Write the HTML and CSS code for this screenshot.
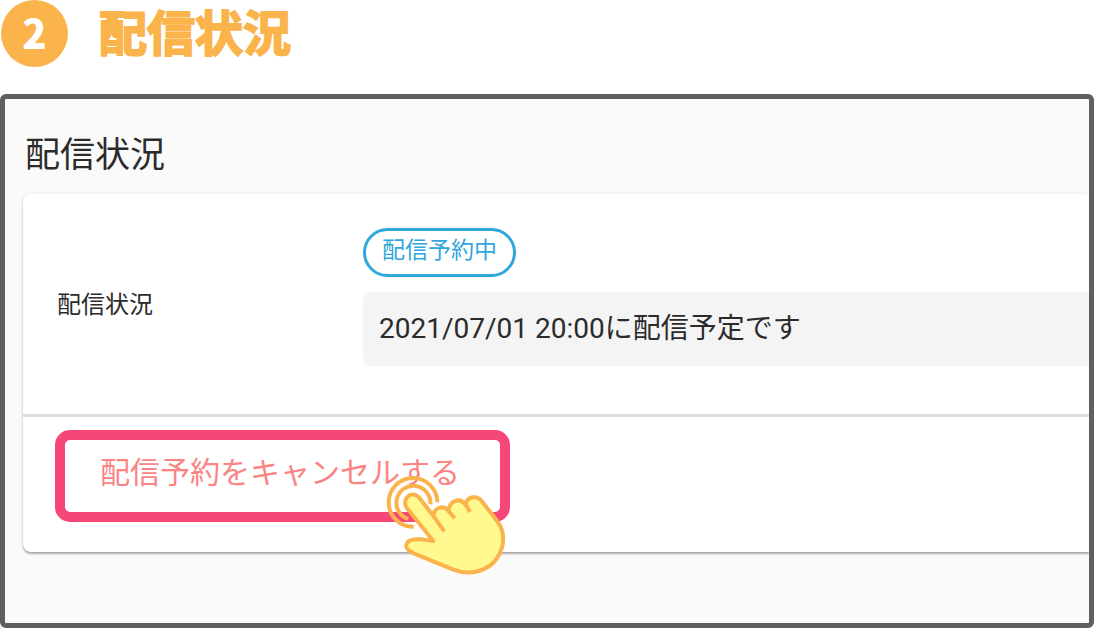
FILE: index.html
```html
<!DOCTYPE html>
<html lang="ja">
<head>
  <meta charset="UTF-8">
  <meta name="viewport" content="width=device-width, initial-scale=1.0">
  <title>配信状況</title>
  <link rel="stylesheet" href="styles.css">
</head>
<body>
  <header class="step">
    <span class="step-number">2</span>
    <h1 class="step-title">配信状況</h1>
  </header>

  <main class="screen">
    <h2 class="screen-title">配信状況</h2>

    <section class="card">
      <div class="status-row">
        <div class="status-label">配信状況</div>
        <div class="status-content">
          <span class="badge">配信予約中</span>
          <p class="message">2021/07/01 20:00に配信予定です</p>
        </div>
      </div>

      <div class="actions">
        <button class="cancel-button" type="button">
          配信予約をキャンセルする
          <!-- タップの手アイコン -->
          <svg class="tap-icon" viewBox="48 45 360 300" aria-hidden="true">
            <path class="ring" d="M131 200A73 73 0 1 1 202 127"/>
            <path class="ring" d="M115 177A51 51 0 1 1 181 133"/>
            <path class="hand" d="M190 243L111 145C92 119 126 85 149 115L191 169C189 146 218 131 235 152C238 124 268 109 287 134C292 108 321 105 335 123L382 184C405 215 406 256 382 293C357 332 302 349 250 329L133 281C117 274 106 267 109 254C113 236 140 237 153 238Z"/>
            <path class="hand" d="M191 169L223 214M235 152L254 175M287 134L300 156"/>
          </svg>
        </button>
      </div>
    </section>
  </main>
</body>
</html>
```
FILE: styles.css
```css
:root {
  --orange: #fbb44c;
  --blue: #30a7dc;
  --pink: #f74678;
  --frame: #605e5f;
  --bg-screen: #fafafa;
  --bg-message: #f4f4f4;
  --text-main: #2b2b2b;
}

* {
  box-sizing: border-box;
}

body {
  display: flex;
  flex-direction: column;
  min-height: 100vh;
  margin: 0;
  font-family: Roboto, "Noto Sans CJK JP", sans-serif;
  background-color: #fff;
  color: var(--text-main);
}

.step {
  display: flex;
  align-items: flex-start;
  gap: 31px;
  height: 68px;
  margin-bottom: 26px;
  padding-left: 1px;
}

.step-number {
  width: 67px;
  height: 67px;
  border-radius: 50%;
  background-color: var(--orange);
  color: #fff;
  font-family: "Noto Sans CJK JP", sans-serif;
  font-size: 40px;
  font-weight: 900;
  line-height: 64px;
  text-align: center;
}

.step-title {
  margin: 0;
  color: var(--orange);
  font-size: 48px;
  font-weight: 700;
  line-height: 70px;
  -webkit-text-stroke: 2px var(--orange);
}

.screen {
  flex: 1;
  padding: 32px 0 70px 18px;
  overflow: hidden;
  border: 5px solid var(--frame);
  border-radius: 6px;
  background-color: var(--bg-screen);
}

.screen-title {
  margin: 0 0 13px 2px;
  font-size: 35px;
  font-weight: 400;
  line-height: 50px;
}

.card {
  border-radius: 8px 0 0 8px;
  background-color: #fff;
  box-shadow: 0 2px 2px rgba(0, 0, 0, 0.3), 0 0 4px rgba(0, 0, 0, 0.08);
}

.status-row {
  display: flex;
  align-items: center;
  min-height: 223px;
  border-bottom: 3px solid #dedede;
}

.status-label {
  width: 340px;
  padding: 0 0 4px 34px;
  font-size: 24px;
}

.status-content {
  flex: 1;
  padding: 34px 0 48px;
}

.badge {
  display: block;
  width: fit-content;
  padding: 0 16px 4px;
  border: 3px solid var(--blue);
  border-radius: 25px;
  color: var(--blue);
  font-size: 23px;
  line-height: 39px;
}

.message {
  margin: 15px 0 0;
  padding: 16px;
  border-radius: 8px 0 0 8px;
  background-color: var(--bg-message);
  font-size: 28px;
  line-height: 42px;
}

.actions {
  padding: 13px 32px 30px;
}

.cancel-button {
  display: block;
  position: relative;
  padding: 12px 40px 18px 35px;
  border: 10px solid var(--pink);
  border-radius: 15px;
  background-color: #fff;
  color: #fa8484;
  font-family: inherit;
  font-size: 30px;
  line-height: 42px;
  cursor: pointer;
}

.tap-icon {
  position: absolute;
  right: -6px;
  bottom: -63px;
  width: 120px;
  height: 100px;
}

.ring,
.hand {
  stroke: var(--orange);
  stroke-width: 12;
  stroke-linejoin: round;
}

.ring {
  fill: none;
}

.hand {
  fill: #fff990;
}
```
